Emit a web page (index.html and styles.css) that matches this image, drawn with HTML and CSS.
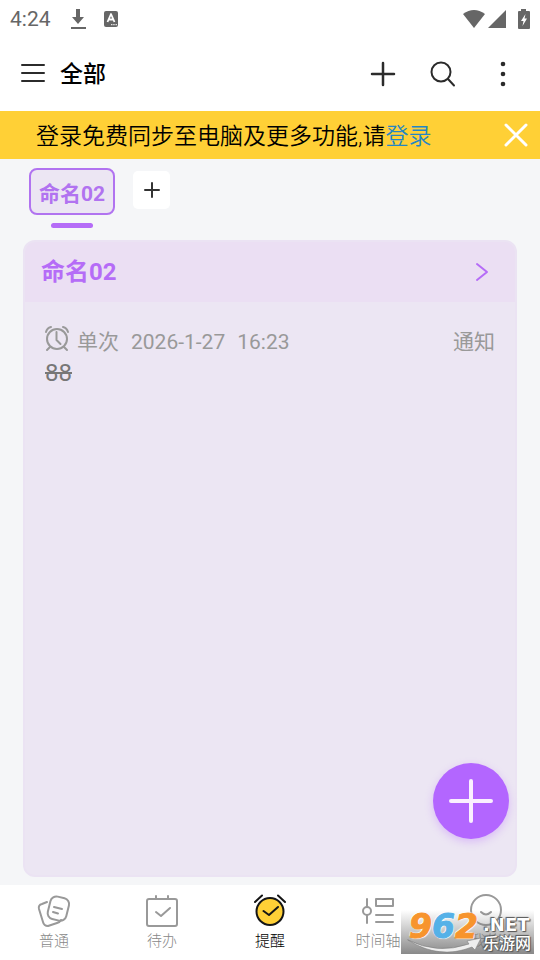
FILE: index.html
```html
<!DOCTYPE html>
<html lang="zh-CN">
<head>
<meta charset="utf-8">
<meta name="viewport" content="width=device-width, initial-scale=1">
<title>全部</title>
<link rel="stylesheet" href="styles.css">
</head>
<body>
<div class="status">
  <span class="clock">4:24</span>
  <svg width="18" height="22" viewBox="0 0 18 22"><path d="M2 20h15" stroke="#666" stroke-width="2"/><path d="M7 1h4v8h4l-6 7-6-7h4z" fill="#666"/></svg>
  <svg class="app" width="16" height="16" viewBox="0 0 16 16"><rect x="1" y="0" width="14" height="16" rx="2" fill="#666"/><path d="M4.500 11L8 3l3.500 8M6 8.500h4" fill="none" stroke="#fff" stroke-width="1.800"/><path d="M8 13.700h1.500M10.200 13.700h1.500M12.500 13.700H14" stroke="#fff"/></svg>
  <span class="space"></span>
  <svg width="24" height="20" viewBox="0 0 24 20"><path d="M1 5Q12-3 23 5L12 19z" fill="#666"/></svg>
  <svg class="signal" width="18" height="18" viewBox="0 0 18 18"><path d="M0 18L18 0v18z" fill="#666"/></svg>
  <svg class="battery" width="12" height="20" viewBox="0 0 12 20"><path d="M3 0h5v2h3q1 0 1 1v16q0 1-1 1H1q-1 0-1-1V3q0-1 1-1h2z" fill="#666"/><path d="M7.500 5L3 12h2.500l-1 5L9 9.500H6.500z" fill="#fff"/></svg>
</div>
<header class="top">
  <button aria-label="菜单"><svg width="24" height="24" viewBox="0 0 24 24"><path d="M1 3h22M1 11h22M1 19h22" /></svg></button>
  <h1>全部</h1>
  <button class="tool" aria-label="新建"><svg class="thick" width="26" height="26" viewBox="0 0 26 26"><path d="M13 2v22M2 13h22"/></svg></button>
  <button class="tool" aria-label="搜索"><svg width="26" height="26" viewBox="0 0 26 26"><circle cx="11" cy="11" r="9.500"/><path d="M18 18l6 6.500"/></svg></button>
  <button class="tool" aria-label="更多"><svg width="26" height="26" viewBox="0 0 26 26"><g class="dots"><circle cx="13" cy="3" r="2.300"/><circle cx="13" cy="13" r="2.300"/><circle cx="13" cy="23" r="2.300"/></g></svg></button>
</header>
<div class="banner">
  <p>登录免费同步至电脑及更多功能,请<a href="#login">登录</a></p>
  <button aria-label="关闭"><svg width="24" height="24" viewBox="0 0 24 24"><path d="M2 2l20 20M22 2L2 22"/></svg></button>
</div>
<main>
  <div class="tabs">
    <div class="tab"><button class="name">命名02</button></div>
    <button class="add" aria-label="添加分类"><svg width="16" height="16" viewBox="0 0 16 16"><path d="M8 1v14M1 8h14"/></svg></button>
  </div>
  <section class="card">
    <a class="head" href="#list"><h2>命名02</h2><svg width="14" height="20" viewBox="0 0 14 20"><path d="M2 2l10 8-10 8"/></svg></a>
    <article>
      <div class="meta">
        <svg width="26" height="28" viewBox="0 0 26 28"><circle cx="13" cy="14" r="10"/><path d="M12.500 7v8l4 4M6 22l-3 3M20 22l3 3M2 7q1-4 5-5M24 7q-1-4-5-5"/></svg>
        <span>单次</span><time>2026-1-27</time><time>16:23</time><span class="kind">通知</span>
      </div>
      <p><s>88</s></p>
    </article>
  </section>
</main>
<button class="fab" aria-label="新建提醒"><svg width="46" height="46" viewBox="0 0 46 46"><path d="M23 3v40M3 23h40"/></svg></button>
<nav>
  <a href="#notes"><svg width="36" height="36" viewBox="0 0 36 36"><path d="M11 9l-5 2q-4 1-3 5l4 13q1 4 5 4l9-3q3-1 4-3"/><rect x="13" y="4" width="19" height="23" rx="6" transform="rotate(14 22 15)"/><path d="M18 14l8 2M17 19l5 1.500"/></svg>普通</a>
  <a href="#todo"><svg width="36" height="36" viewBox="0 0 36 36"><rect x="3" y="6" width="30" height="27" rx="2"/><path d="M12 3v3M24 3v3M12 19l5 4 9-8"/></svg>待办</a>
  <a class="current" href="#remind"><svg width="36" height="36" viewBox="0 0 36 36"><circle cx="18" cy="18.500" r="13.500"/><path d="M11.500 18l5.500 4 9-8M3 9l7-6.500M33 9l-7-6.500"/></svg>提醒</a>
  <a href="#timeline"><svg width="36" height="36" viewBox="0 0 36 36"><circle cx="7" cy="18" r="4"/><path d="M7 6v8M7 22v8M16 6h17v7H16zM16 22h17M16 29h17"/></svg>时间轴</a>
  <a href="#me"><svg width="36" height="36" viewBox="0 0 36 36"><circle cx="18" cy="17" r="15"/><path d="M13 19q5 5 10 0"/></svg>我的</a>
</nav>
<div class="mark">
  <div class="number"><span>9</span><span class="blue">6</span><span>2</span></div>
  <div class="site"><span>.NET</span><span class="zh">乐游网</span></div>
  <svg class="swoosh" width="76" height="18" viewBox="0 0 76 18"><path d="M1 4Q30 19 62 8L60 5l14-3-6 12-3-3Q32 24 1 4z" fill="#eee" stroke="#777" stroke-width=".5"/></svg>
</div>
</body>
</html>
```
FILE: styles.css
```css
* { box-sizing: border-box; }
body {
  margin: 0;
  min-height: 100vh;
  display: flex;
  flex-direction: column;
  position: relative;
  background: #fff;
  color: #000;
  font-family: Roboto, "Noto Sans CJK SC", sans-serif;
}
h1, h2, p { margin: 0; }
button { padding: 0; border: 0; background: none; font: inherit; color: inherit; cursor: pointer; }
a { color: inherit; text-decoration: none; }
svg { display: block; flex: none; fill: none; stroke-linecap: round; stroke-linejoin: round; }

.status { display: flex; align-items: center; height: 37px; padding: 0 10px; color: #666; }
.clock { font-size: 21px; line-height: 24px; margin-right: 18px; }
.app { margin-left: 16px; }
.space { flex: 1; }
.signal { margin: 0 12px 0 2px; }
.status svg { stroke-linecap: butt; }

.top { display: flex; align-items: center; height: 74px; padding: 0 24px 0 21px; }
.top svg { stroke: #2b2b2b; stroke-width: 2; }
.top .thick { stroke-width: 2.5; }
.top .dots { fill: #2b2b2b; stroke: none; }
h1 { flex: 1; margin-left: 15px; padding-top: 2px; font-size: 23px; line-height: 32px; font-weight: 500; }
.tool { margin-left: 34px; }

.banner { display: flex; align-items: center; justify-content: space-between; height: 48px; padding: 0 12px 0 36px; background: #ffd036; font-size: 23px; line-height: 32px; font-weight: 350; }
.banner p { padding-top: 4px; }
.banner a { color: #2486c4; }
.banner svg { stroke: #fff; stroke-width: 3; }

main { flex: 1; display: flex; flex-direction: column; padding: 9px 23px 8px; background: #f5f6f8; }
.tabs { display: flex; align-items: flex-start; gap: 18px; height: 72px; padding-left: 6px; }
.tab { display: flex; flex-direction: column; align-items: center; gap: 8px; }
.tab::after { content: ""; width: 42px; height: 5px; border-radius: 3px; background: #b56cf7; }
.name { height: 47px; padding: 0 8px; border: 2px solid #b173f0; border-radius: 8px; background: #ece6f3; color: #b173f0; font-size: 21px; font-weight: 700; }
.add { display: grid; place-items: center; width: 37px; height: 38px; margin-top: 3px; border-radius: 5px; background: #fff; }
.add svg { stroke: #333; stroke-width: 2; }
.card { flex: 1; border: 2px solid #ebe3f3; border-radius: 12px; background: #ece6f3; overflow: hidden; }
.head { display: flex; align-items: center; justify-content: space-between; height: 60px; padding: 0 26px 0 16px; background: #ebdff3; color: #b56cf7; }
.head svg { stroke: #b56cf7; stroke-width: 2; }
h2 { font-size: 24px; line-height: 32px; font-weight: 700; }
article { padding: 20px; }
.meta { display: flex; align-items: center; gap: 12px; padding-top: 3px; color: #999; font-size: 21px; line-height: 32px; }
.meta svg { margin: 0 -5px 6px -1px; stroke: #999; stroke-width: 2; }
.meta .kind { margin-left: auto; }
article p { color: #777; font-size: 24px; line-height: 28px; }

.fab { position: absolute; right: 31px; bottom: 121px; display: grid; place-items: center; width: 76px; height: 76px; border-radius: 50%; background: #b366ff; box-shadow: 0 3px 8px #b366ff55; }
.fab svg { stroke: #faf0ff; stroke-width: 4; }

nav { display: grid; grid-template-columns: repeat(5, 1fr); height: 75px; padding-top: 8px; background: #fff; }
nav a { display: flex; flex-direction: column; align-items: center; color: #888; font-size: 15px; line-height: 24px; font-weight: 300; }
nav svg { stroke: #999; stroke-width: 2; }
nav .current { color: #000; }
.current svg { stroke: #151515; }
.current circle { fill: #ffd036; }

.mark { position: absolute; right: 6px; bottom: 6px; display: flex; justify-content: space-between; width: 133px; height: 44px; padding: 0 3px 0 8px; background: linear-gradient(#8880, #777d); font-family: "DejaVu Sans", "Noto Sans CJK SC", sans-serif; font-weight: 700; pointer-events: none; }
.number { font-size: 33px; line-height: 34px; font-style: italic; color: #f7942d; -webkit-text-stroke: 1px currentColor; text-shadow: 0 0 1px #fff, 1px 1px 1px #fff, -1px -1px 1px #fff; }
.blue { color: #55b1e7; }
.site { display: flex; flex-direction: column; padding-top: 4px; font-size: 18px; line-height: 22px; color: #fff; text-shadow: 0 0 1px #555, 1px 1px 1px #555, -1px -1px 1px #555; }
.zh { font-size: 16px; line-height: 16px; font-weight: 500; }
.swoosh { position: absolute; left: 6px; bottom: 0; }
```
